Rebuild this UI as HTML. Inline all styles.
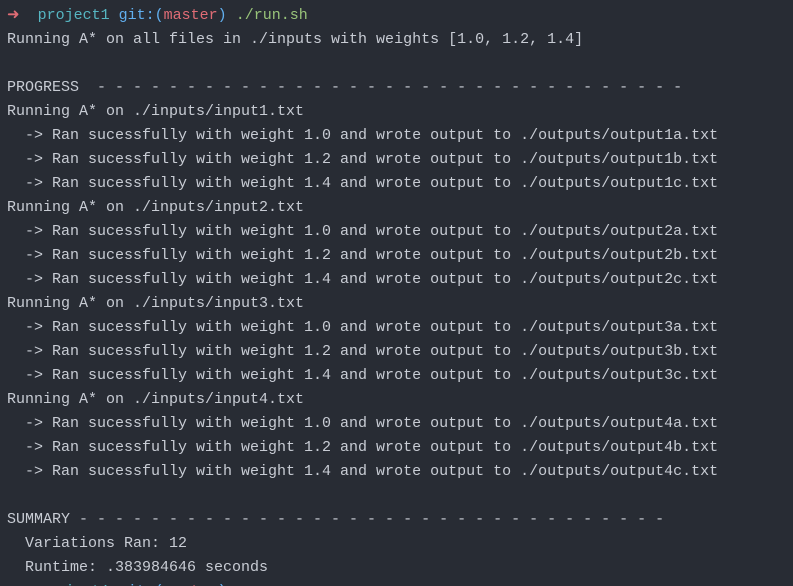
<!DOCTYPE html>
<html><head><meta charset="utf-8"><style>
html,body{margin:0;padding:0;background:#282c34;width:793px;height:586px;overflow:hidden}
pre{margin:0;padding:4px 0 0 7px;font-family:"Liberation Mono",monospace;font-size:15px;line-height:24px;color:#c8ccd4}
.r{color:#e06c75}.c{color:#56b6c2}.b{color:#61afef}.g{color:#98c379}
</style></head><body><pre><span class="r">➜</span>  <span class="c">project1</span> <span class="b">git:(</span><span class="r">master</span><span class="b">)</span> <span class="g">./run.sh</span>
Running A* on all files in ./inputs with weights [1.0, 1.2, 1.4]

PROGRESS  - - - - - - - - - - - - - - - - - - - - - - - - - - - - - - - - -
Running A* on ./inputs/input1.txt
  -> Ran sucessfully with weight 1.0 and wrote output to ./outputs/output1a.txt
  -> Ran sucessfully with weight 1.2 and wrote output to ./outputs/output1b.txt
  -> Ran sucessfully with weight 1.4 and wrote output to ./outputs/output1c.txt
Running A* on ./inputs/input2.txt
  -> Ran sucessfully with weight 1.0 and wrote output to ./outputs/output2a.txt
  -> Ran sucessfully with weight 1.2 and wrote output to ./outputs/output2b.txt
  -> Ran sucessfully with weight 1.4 and wrote output to ./outputs/output2c.txt
Running A* on ./inputs/input3.txt
  -> Ran sucessfully with weight 1.0 and wrote output to ./outputs/output3a.txt
  -> Ran sucessfully with weight 1.2 and wrote output to ./outputs/output3b.txt
  -> Ran sucessfully with weight 1.4 and wrote output to ./outputs/output3c.txt
Running A* on ./inputs/input4.txt
  -> Ran sucessfully with weight 1.0 and wrote output to ./outputs/output4a.txt
  -> Ran sucessfully with weight 1.2 and wrote output to ./outputs/output4b.txt
  -> Ran sucessfully with weight 1.4 and wrote output to ./outputs/output4c.txt

SUMMARY - - - - - - - - - - - - - - - - - - - - - - - - - - - - - - - - -
  Variations Ran: 12
  Runtime: .383984646 seconds
<span class="r">➜</span>  <span class="c">project1</span> <span class="b">git:(</span><span class="r">master</span><span class="b">)</span></pre></body></html>
